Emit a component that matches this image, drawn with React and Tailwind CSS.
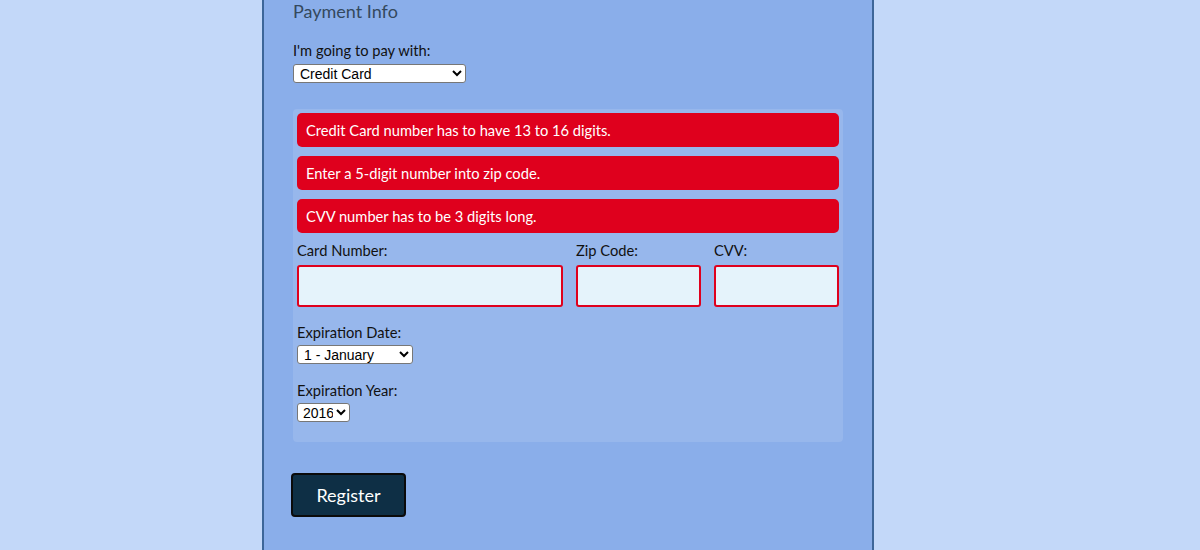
export default function App() {
  const errors = [
    "Credit Card number has to have 13 to 16 digits.",
    "Enter a 5-digit number into zip code.",
    "CVV number has to be 3 digits long.",
  ];

  return (
    <div className="h-[550px] w-[1200px] overflow-hidden bg-[#c3d8f9] font-['Lato',sans-serif] text-[14.7px] text-[#111]">
      <div className="ml-[262px] h-[550px] w-[612px] border-x-2 border-[#3d6699] bg-[#8aaeea] pl-[29px]">
        <h2 className="pt-[1px] text-[18px] leading-[20px] text-[#34495e]">Payment Info</h2>

        {/* payment method */}
        <label className="mt-[19px] block leading-[20px]">I'm going to pay with:</label>
        <select className="mt-[4px] block h-[19px] w-[173px] rounded-[3px] border border-[#777] bg-white pl-[2px] font-['Liberation_Sans',Arial,sans-serif] text-[14px] leading-[16px] text-black">
          <option>Credit Card</option>
          <option>PayPal</option>
          <option>Bitcoin</option>
        </select>

        {/* credit card panel */}
        <div className="mt-[26px] w-[550px] rounded-[4px] bg-[#97b7ec] px-[4px] pt-[4px] pb-[20px]">
          <div className="flex flex-col gap-[9px]">
            {errors.map((msg) => (
              <div
                key={msg}
                className="flex h-[34px] items-center rounded-[5px] bg-[#df001d] pl-[9px] text-white"
              >
                {msg}
              </div>
            ))}
          </div>

          <div className="mt-[8px] flex gap-[13px]">
            <div className="w-[266px]">
              <label className="block leading-[18px]">Card Number:</label>
              <input className="mt-[6px] block h-[42px] w-full rounded-[3px] border-2 border-[#df001d] bg-[#e5f3fb]" />
            </div>
            <div className="w-[125px]">
              <label className="block leading-[18px]">Zip Code:</label>
              <input className="mt-[6px] block h-[42px] w-full rounded-[3px] border-2 border-[#df001d] bg-[#e5f3fb]" />
            </div>
            <div className="w-[125px]">
              <label className="block leading-[18px]">CVV:</label>
              <input className="mt-[6px] block h-[42px] w-full rounded-[3px] border-2 border-[#df001d] bg-[#e5f3fb]" />
            </div>
          </div>

          <label className="mt-[15px] block leading-[20px]">Expiration Date:</label>
          <select className="mt-[3px] block h-[19px] w-[116px] rounded-[3px] border border-[#777] bg-white pl-[2px] font-['Liberation_Sans',Arial,sans-serif] text-[14px] leading-[16px] text-black">
            <option>1 - January</option>
            <option>2 - February</option>
          </select>

          <label className="mt-[16px] block leading-[20px]">Expiration Year:</label>
          <select className="mt-[3px] block h-[19px] w-[53px] rounded-[3px] border border-[#777] bg-white pl-[1px] font-['Liberation_Sans',Arial,sans-serif] text-[14px] leading-[16px] text-black">
            <option>2016</option>
            <option>2017</option>
          </select>
        </div>

        <button className="mt-[31px] -ml-[2px] block h-[44px] w-[115px] rounded-[4px] border-2 border-[#0a0a0a] bg-[#0e2f45] text-[18px] text-white">
          Register
        </button>
      </div>
    </div>
  );
}
